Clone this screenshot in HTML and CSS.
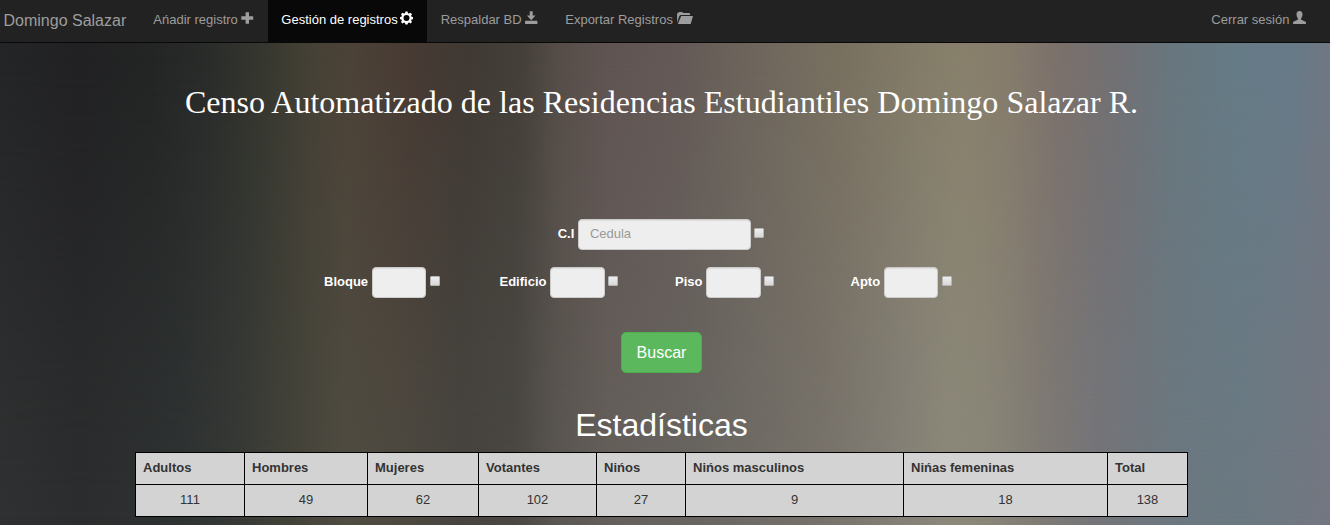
FILE: index.html
```html
<!DOCTYPE html>
<html lang="es">
<head>
<meta charset="utf-8">
<title>Censo Domingo Salazar</title>
<link rel="stylesheet" href="styles.css">
</head>
<body>
<nav class="navbar">
  <a class="brand">Domingo Salazar</a>
  <a class="nav-link">Ańadir registro <svg class="icon" viewBox="0 0 13 14"><path d="M4.600 1.200h3.400v4.100h4.200v3.400H8v4.100H4.600V8.700H.3V5.300h4.300z"/></svg></a>
  <a class="nav-link active">Gestión de registros<svg class="icon cog" viewBox="0 0 13 14"><path fill-rule="evenodd" d="M5.400 .5h2.200l.4 1.700 1 .4 1.500-.9 1.500 1.500-.9 1.500.4 1 1.500.3v2.200l-1.500.3-.4 1 .9 1.500-1.500 1.500-1.500-.9-1 .4-.4 1.500H5.400L5 12l-1-.4-1.500.9L1 11l.9-1.500-.4-1L0 8.200V6l1.500-.3.4-1L1 3.200l1.500-1.500 1.500.9 1-.4zM6.500 4.100a3 3 0 1 0 0 6 3 3 0 0 0 0-6z"/></svg></a>
  <a class="nav-link">Respaldar BD <svg class="icon" viewBox="0 0 13 14"><path d="M4.700 .3h3v4.200h2.800L6.200 9.200 1.900 4.500h2.800zM.1 9.800h12.300v3.200H.1z"/></svg></a>
  <a class="nav-link">Exportar Registros <svg class="icon folder" viewBox="0 0 17 14"><path d="M.1 11.800V2.700l.8-.9h.5l.6-.9h3.300l.7 1h6.200l.9.900v1.200H3.600L2.300 5zM4.200 4.900H16L13.700 13H.8z"/></svg></a>
  <a class="nav-link logout">Cerrar sesión <svg class="icon" viewBox="0 0 13 14"><path d="M6.500.1c2 0 3.100 1.400 3 3.400-.1 1.900-.7 3.100-1.400 3.900v1.400c1.700.8 4.300 1.500 4.800 2.300V13H.1v-1.900c.5-.8 3.100-1.500 4.800-2.300V7.400c-.7-.8-1.300-2-1.400-3.900-.1-2 1-3.400 3-3.400z"/></svg></a>
</nav>
<main class="container">
  <h1 class="title">Censo Automatizado de las Residencias Estudiantiles Domingo Salazar R.</h1>
  <form class="search">
    <div class="field id-field"><label>C.I</label><input class="control wide" type="text" placeholder="Cedula"><input class="check" type="checkbox"></div>
    <div class="filters">
      <div class="field"><label>Bloque</label><input class="control" type="text"><input class="check" type="checkbox"></div>
      <div class="field"><label>Edificio</label><input class="control" type="text"><input class="check" type="checkbox"></div>
      <div class="field"><label>Piso</label><input class="control" type="text"><input class="check" type="checkbox"></div>
      <div class="field"><label>Apto</label><input class="control" type="text"><input class="check" type="checkbox"></div>
    </div>
    <button class="submit" type="button">Buscar</button>
  </form>
  <h2 class="subtitle">Estadísticas</h2>
  <table class="stats">
    <colgroup><col class="c1"><col class="c2"><col class="c3"><col class="c4"><col class="c5"><col class="c6"><col class="c7"><col class="c8"></colgroup>
    <tr><th>Adultos</th><th>Hombres</th><th>Mujeres</th><th>Votantes</th><th>Nińos</th><th>Nińos masculinos</th><th>Nińas femeninas</th><th>Total</th></tr>
    <tr><td>111</td><td>49</td><td>62</td><td>102</td><td>27</td><td>9</td><td>18</td><td>138</td></tr>
  </table>
</main>
</body>
</html>
```
FILE: styles.css
```css
* { box-sizing: border-box; }
html, body { height: 100%; }
body {
  margin: 0;
  overflow: hidden;
  position: relative;
  font: 13px/18px "Liberation Sans", Arial, sans-serif;
  color: #fff;
  background: linear-gradient(90deg, #303132 0, #2c2d2e 80px, #2f3333 180px, #373a36 240px, #424239 285px, #4f4c42 345px, #4e4a41 400px, #474540 460px, #4a4843 515px, #5a5651 555px, #65605b 610px, #696661 700px, #77726b 820px, #848078 900px, #8c897b 950px, #8a8779 985px, #7f7b75 1040px, #74757a 1100px, #6c7880 1180px, #6b7982 1240px, #747780 1330px);
}
body::before {
  content: "";
  position: absolute;
  inset: 0;
  z-index: -1;
  background: linear-gradient(90deg, #242527 0, #212123 80px, #232424 150px, #2a2c2a 210px, #35362f 260px, #454035 310px, #4c4237 350px, #473a33 410px, #403933 465px, #443f39 520px, #564d48 560px, #605452 610px, #645956 680px, #6d655c 750px, #78705f 840px, #837c68 920px, #88806b 965px, #857b6b 1010px, #7b706b 1060px, #717073 1115px, #68767e 1170px, #657b86 1235px, #677a88 1290px, #6f7782 1330px);
  mask-image: linear-gradient(#000 10%, rgba(0, 0, 0, .25) 70%, transparent 100%);
}
.navbar {
  display: flex;
  height: 43px;
  padding: 0 10.500px 0 3.500px;
  background: #222;
  border-bottom: 1px solid #080808;
  color: #9d9d9d;
}
.brand { width: 136.300px; padding-top: 12px; font-size: 16px; }
.nav-link { padding: 11px 13.500px 0; white-space: pre; }
.active { background: #080808; color: #fff; padding: 11px 14px 0 13.400px; }
.logout { margin-left: auto; }
.icon { width: 13px; height: 14px; vertical-align: -1px; fill: currentColor; }
.cog { margin-left: 2.500px; }
.folder { width: 17px; }
.container { width: 1053px; margin-left: 135px; }
.title {
  margin: 40px 0 0;
  font: 400 32.060px/38px "Liberation Serif", "Times New Roman", serif;
  text-align: center;
  white-space: nowrap;
}
.search { padding-top: 98px; }
.field { display: flex; align-items: center; height: 31px; }
.id-field { padding-left: 422.700px; }
label { font-weight: 700; margin-right: 3.600px; position: relative; top: -1px; }
.control {
  width: 54.500px;
  height: 31px;
  padding: 4px 11px 6px;
  border: 1px solid #ccc;
  border-radius: 4px;
  background: #eee;
  box-shadow: inset 0 1px 1px rgba(0, 0, 0, .075);
  font: inherit;
}
.wide { width: 173px; }
.control::placeholder { color: #999; opacity: 1; }
.check {
  appearance: none;
  width: 10px;
  height: 10px;
  margin: 0 0 3px 3.500px;
  border: 1px solid #b5b5b5;
  border-radius: 1px;
  background: linear-gradient(#eee, #d8d8d8);
}
.filters { display: grid; grid-template-columns: repeat(4, 175.500px); padding-left: 189px; margin-top: 17px; }
.submit {
  display: block;
  width: 81px;
  height: 41px;
  margin: 34px 0 0 486px;
  padding: 0;
  border: 1px solid #4cae4c;
  border-radius: 5px;
  background: #5cb85c;
  color: #fff;
  font: 16px/24px "Liberation Sans", Arial, sans-serif;
}
.subtitle { margin: 34px 0 9px; font-size: 32px; line-height: 36px; font-weight: 400; text-align: center; }
.stats { width: 1053px; table-layout: fixed; border-collapse: collapse; background: #d3d3d3; color: #333; }
.stats th, .stats td { height: 32px; padding: 0 7px 1px; border: 1px solid #000; }
.stats th { text-align: left; }
.stats td { text-align: center; }
.c1 { width: 109px; }
.c2 { width: 123px; }
.c3 { width: 111px; }
.c4 { width: 118px; }
.c5 { width: 89px; }
.c6 { width: 218px; }
.c7 { width: 204px; }
.c8 { width: 80px; }
```
